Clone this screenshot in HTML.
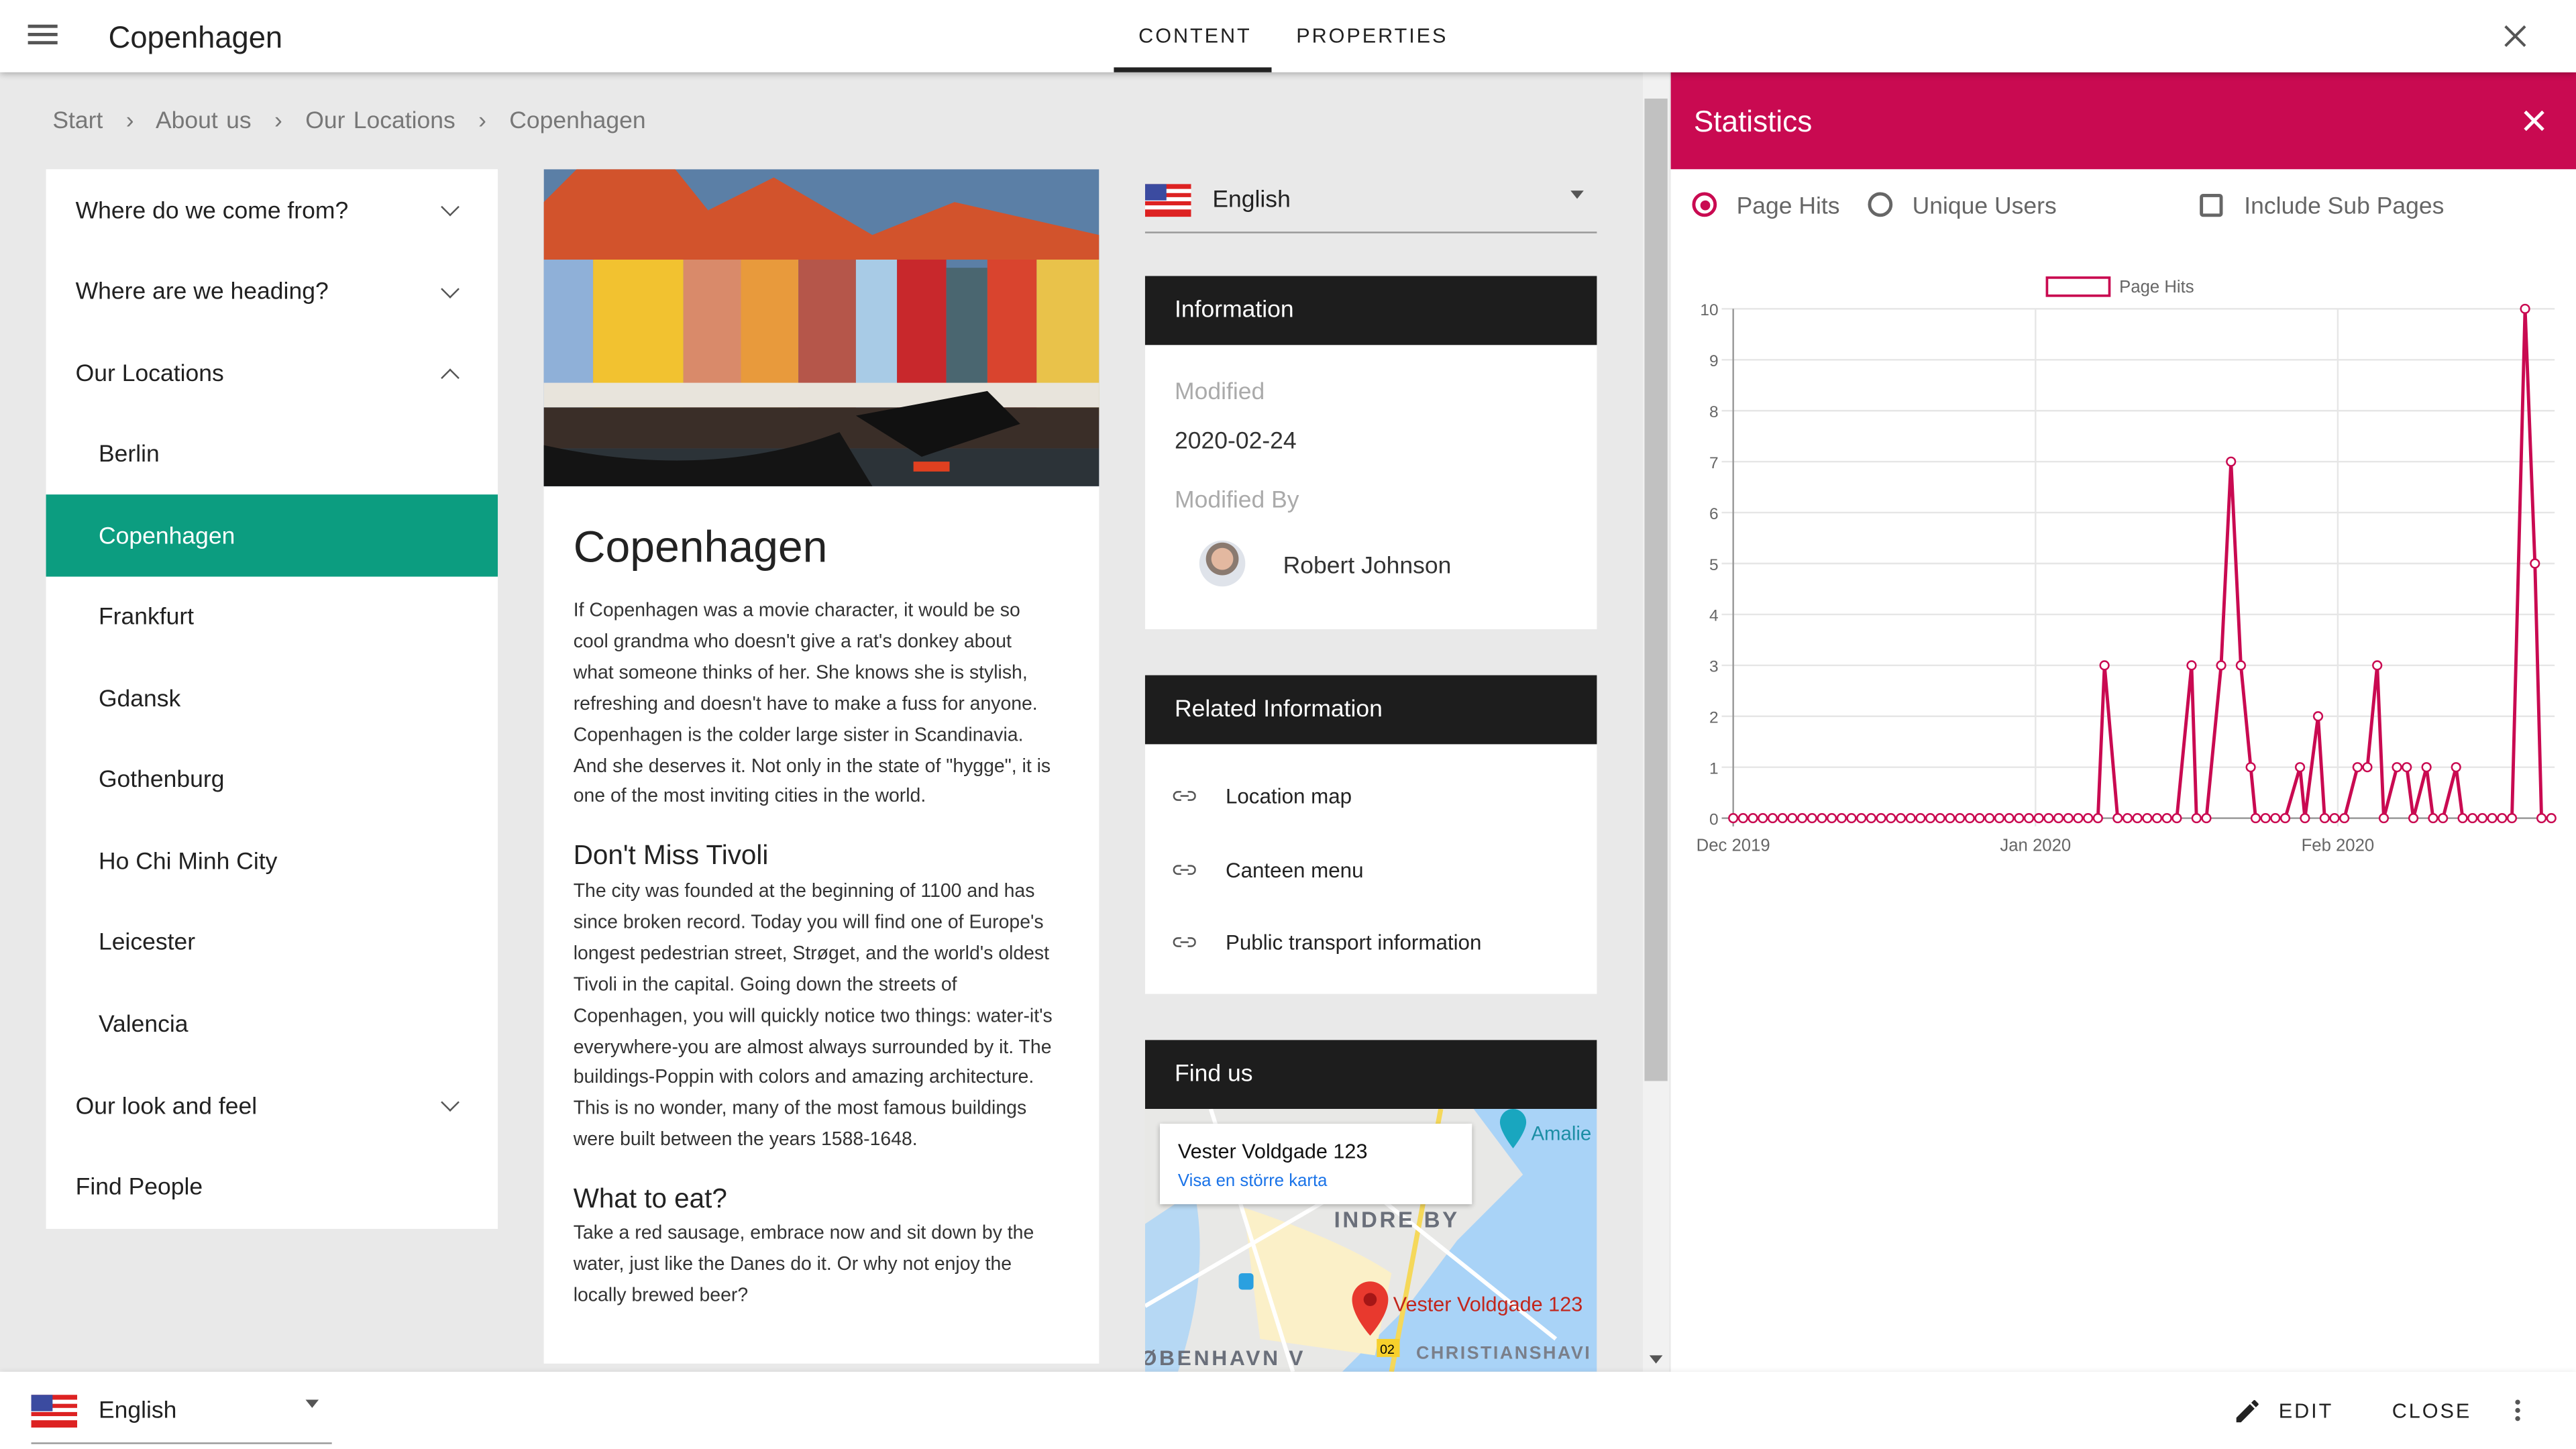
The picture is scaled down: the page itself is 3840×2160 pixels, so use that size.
<!DOCTYPE html>
<html><head><meta charset="utf-8">
<style>
html,body{margin:0;padding:0;width:3840px;height:2160px;overflow:hidden;background:#fff}
#r{position:absolute;left:0;top:0;width:1568px;height:882px;transform:scale(2.44898);transform-origin:0 0;font-family:"Liberation Sans",Roboto,sans-serif;color:#212121;background:#e9e9e9;overflow:hidden}
.a{position:absolute}
.hdr{left:0;top:0;width:1568px;height:44px;background:#fff;box-shadow:0 1px 4px rgba(0,0,0,.3);z-index:5}
.nav{left:28px;top:103px;width:275px;height:645px;background:#fff}
.nav div{position:absolute;left:18px;font-size:14.5px}
.chev{position:absolute;left:242px;width:7px;height:7px;border-right:1.6px solid #555;border-bottom:1.6px solid #555}
.card{background:#fff}
.bh{background:#1d1d1d;color:#fff;font-size:14.5px;padding-left:18px;line-height:42px;height:42px}
p{margin:0}
.txt{font-size:11.6px;line-height:18.9px;color:#333}
.link{position:absolute;left:49px;font-size:12.8px;color:#222}
.li{position:absolute;left:17px;width:14px;height:7px}
</style></head><body><div id="r">
<div class="a hdr">
 <div class="a" style="left:17px;top:15px;width:18px;height:2px;background:#555;box-shadow:0 5px 0 #555,0 10px 0 #555"></div>
 <div class="a" style="left:66px;top:12px;font-size:18.5px;color:#222">Copenhagen</div>
 <div class="a" style="left:693px;top:15px;font-size:12.5px;letter-spacing:1.2px;color:#222">CONTENT</div>
 <div class="a" style="left:678px;top:41px;width:96px;height:3px;background:#222"></div>
 <div class="a" style="left:789px;top:15px;font-size:12.5px;letter-spacing:1.2px;color:#222">PROPERTIES</div>
 <svg class="a" style="left:1524px;top:15px" width="14" height="14"><path d="M1 1L13 13M13 1L1 13" stroke="#555" stroke-width="1.6"/></svg>
</div>
<div class="a" style="left:32px;top:66px;font-size:14.5px;color:#777;word-spacing:1px">Start <span style="margin:0 9px">›</span> About us <span style="margin:0 9px">›</span> Our Locations <span style="margin:0 9px">›</span> Copenhagen</div>
<div class="a nav">
 <div style="top:18px">Where do we come from?</div><span class="chev" style="top:19px;transform:rotate(45deg)"></span>
 <div style="top:67px">Where are we heading?</div><span class="chev" style="top:69px;transform:rotate(45deg)"></span>
 <div style="top:117px">Our Locations</div><span class="chev" style="top:123px;transform:rotate(225deg)"></span>
 <div style="top:166px;left:32px">Berlin</div>
 <div style="top:198px;left:0;width:275px;height:50px;background:#0c9d80"></div>
 <div style="top:216px;left:32px;color:#fff">Copenhagen</div>
 <div style="top:265px;left:32px">Frankfurt</div>
 <div style="top:315px;left:32px">Gdansk</div>
 <div style="top:364px;left:32px">Gothenburg</div>
 <div style="top:414px;left:32px">Ho Chi Minh City</div>
 <div style="top:463px;left:32px">Leicester</div>
 <div style="top:513px;left:32px">Valencia</div>
 <div style="top:563px">Our look and feel</div><span class="chev" style="top:564px;transform:rotate(45deg)"></span>
 <div style="top:612px">Find People</div>
</div>
<div class="a card" style="left:331px;top:103px;width:338px;height:727px">
 <svg class="a" style="left:0;top:0" width="338" height="193">
  <rect width="338" height="193" fill="#5b7fa6"/>
  <rect x="0" y="20" width="30" height="130" fill="#8fb0d8"/>
  <rect x="30" y="25" width="55" height="125" fill="#f2c230"/>
  <rect x="85" y="35" width="35" height="115" fill="#d98a6a"/>
  <rect x="120" y="35" width="35" height="115" fill="#e89a3c"/>
  <rect x="155" y="45" width="35" height="105" fill="#b5564a"/>
  <rect x="190" y="55" width="25" height="95" fill="#a8cbe6"/>
  <rect x="215" y="45" width="30" height="105" fill="#c8282c"/>
  <rect x="245" y="60" width="25" height="90" fill="#4a6670"/>
  <rect x="270" y="50" width="30" height="100" fill="#d9442e"/>
  <rect x="300" y="55" width="38" height="95" fill="#e9c24a"/>
  <path d="M0 20L20 0H80L100 25L140 5L200 40L250 20L338 40V55H0Z" fill="#d2532c"/>
  <rect x="0" y="130" width="338" height="15" fill="#e8e4dc"/>
  <rect x="0" y="145" width="338" height="25" fill="#3a2e28"/>
  <rect x="0" y="170" width="338" height="23" fill="#2c3338"/>
  <path d="M0 168Q100 190 180 160L200 193H0Z" fill="#141414"/>
  <path d="M190 150L270 135L290 155L230 175Z" fill="#111"/>
  <path d="M225 178h22v6h-22z" fill="#e04020"/>
 </svg>
 <div class="a" style="left:18px;top:215px;font-size:27px;color:#222">Copenhagen</div>
 <p class="a txt" style="left:18px;top:260px;width:291px">If Copenhagen was a movie character, it would be so cool grandma who doesn't give a rat's donkey about what someone thinks of her. She knows she is stylish, refreshing and doesn't have to make a fuss for anyone. Copenhagen is the colder large sister in Scandinavia. And she deserves it. Not only in the state of "hygge", it is one of the most inviting cities in the world.</p>
 <div class="a" style="left:18px;top:409px;font-size:16.5px;color:#222">Don't Miss Tivoli</div>
 <p class="a txt" style="left:18px;top:431px;width:300px">The city was founded at the beginning of 1100 and has since broken record. Today you will find one of Europe's longest pedestrian street, Strøget, and the world's oldest Tivoli in the capital. Going down the streets of Copenhagen, you will quickly notice two things: water-it's everywhere-you are almost always surrounded by it. The buildings-Poppin with colors and amazing architecture. This is no wonder, many of the most famous buildings were built between the years 1588-1648.</p>
 <div class="a" style="left:18px;top:618px;font-size:16.5px;color:#222">What to eat?</div>
 <p class="a txt" style="left:18px;top:639px;width:291px">Take a red sausage, embrace now and sit down by the water, just like the Danes do it. Or why not enjoy the locally brewed beer?</p>
</div>
<svg class="a" style="left:697px;top:112px" width="28" height="20"><rect width="28" height="20" fill="#d22"/><rect y="3" width="28" height="2.5" fill="#fff"/><rect y="8" width="28" height="2.5" fill="#fff"/><rect y="13" width="28" height="2.5" fill="#fff"/><rect width="13" height="10" fill="#3b4ba0"/></svg>
<div class="a" style="left:738px;top:114px;font-size:14.5px">English</div>
<div class="a" style="left:956px;top:116px;border:4.5px solid transparent;border-top:5px solid #555"></div>
<div class="a" style="left:697px;top:141px;width:275px;height:1px;background:#999"></div>
<div class="a card" style="left:697px;top:168px;width:275px;height:215px">
 <div class="bh">Information</div>
 <div class="a" style="left:18px;top:63px;font-size:14.5px;color:#aaa">Modified</div>
 <div class="a" style="left:18px;top:93px;font-size:14.5px;color:#333">2020-02-24</div>
 <div class="a" style="left:18px;top:129px;font-size:14.5px;color:#aaa">Modified By</div>
 <div class="a" style="left:33px;top:161px;width:28px;height:28px;border-radius:50%;background:radial-gradient(circle at 50% 40%,#e3b8a0 0 30%,#8a7a70 31% 45%,#dfe3ea 46%)"></div>
 <div class="a" style="left:84px;top:169px;font-size:14.5px;color:#333">Robert Johnson</div>
</div>
<div class="a card" style="left:697px;top:411px;width:275px;height:194px">
 <div class="bh">Related Information</div>
 <svg class="li" style="top:70px" viewBox="0 0 14 7"><path d="M5 1H3a2.5 2.5 0 000 5h2M9 1h2a2.5 2.5 0 010 5H9M4.5 3.5h5" stroke="#555" fill="none" stroke-width="1"/></svg>
 <div class="link" style="top:66px">Location map</div>
 <svg class="li" style="top:115px" viewBox="0 0 14 7"><path d="M5 1H3a2.5 2.5 0 000 5h2M9 1h2a2.5 2.5 0 010 5H9M4.5 3.5h5" stroke="#555" fill="none" stroke-width="1"/></svg>
 <div class="link" style="top:111px">Canteen menu</div>
 <svg class="li" style="top:159px" viewBox="0 0 14 7"><path d="M5 1H3a2.5 2.5 0 000 5h2M9 1h2a2.5 2.5 0 010 5H9M4.5 3.5h5" stroke="#555" fill="none" stroke-width="1"/></svg>
 <div class="link" style="top:155px">Public transport information</div>
</div>
<div class="a" style="left:697px;top:633px;width:275px;height:202px;overflow:hidden;background:#eceae6">
 <div class="bh">Find us</div>
 <svg class="a" style="left:0;top:42px" width="275" height="160">
  <rect width="275" height="160" fill="#e8e8e6"/>
  <path d="M200 0L275 0V160H120L160 120L190 80L230 40Z" fill="#a9d3f7"/>
  <path d="M30 50Q40 100 20 160H0V70Z" fill="#a9d3f7" opacity=".8"/>
  <path d="M60 60Q120 80 150 100L140 150L70 140Z" fill="#fbf0c8"/>
  <path d="M180 0L150 160" stroke="#f5d85a" stroke-width="3"/>
  <path d="M0 120L120 50M40 0L90 160M100 20L250 140" stroke="#fff" stroke-width="2.5" fill="none"/>
  <path d="M216 8a8 8 0 0116 0c0 6-8 16-8 16s-8-10-8-16z" fill="#19a6bf"/>
  <text x="235" y="19" font-size="12" fill="#1c8ea5" font-family="Liberation Sans">Amalie</text>
  <text x="115" y="72" font-size="13.5" fill="#6a6f7a" font-weight="bold" letter-spacing="1.5" font-family="Liberation Sans">INDRE BY</text>
  <text x="-3" y="156" font-size="13" fill="#6a6f7a" font-weight="bold" letter-spacing="1.5" font-family="Liberation Sans">ØBENHAVN V</text>
  <text x="165" y="152" font-size="11" fill="#7a7f8a" font-weight="bold" letter-spacing="1" font-family="Liberation Sans">CHRISTIANSHAVI</text>
  <rect x="141" y="140" width="14" height="11" fill="#f7d02c"/>
  <text x="143" y="149" font-size="8" font-family="Liberation Sans">02</text>
  <rect x="57" y="100" width="9" height="10" rx="2" fill="#2aa0e0"/>
  <path d="M126 116a11 11 0 0122 0c0 10-11 22-11 22s-11-12-11-22z" fill="#e8392e"/>
  <circle cx="137" cy="116" r="4" fill="#a51616"/>
  <text x="151" y="123" font-size="12.5" fill="#c2261c" font-family="Liberation Sans">Vester Voldgade 123</text>
 </svg>
 <div class="a" style="left:9px;top:51px;width:190px;height:49px;background:#fff;box-shadow:0 1px 3px rgba(0,0,0,.3)">
  <div class="a" style="left:11px;top:10px;font-size:12.5px;color:#111">Vester Voldgade 123</div>
  <div class="a" style="left:11px;top:29px;font-size:10.5px;color:#1a73e8">Visa en större karta</div>
 </div>
</div>
<div class="a" style="left:1000px;top:44px;width:16px;height:791px;background:#f1f1f1"></div>
<div class="a" style="left:1001px;top:60px;width:14px;height:598px;background:#c1c1c1"></div>
<div class="a" style="left:1004px;top:825px;border:4px solid transparent;border-top:5px solid #555"></div>
<div class="a" style="left:1017px;top:44px;width:551px;height:791px;background:#fff">
 <div class="a" style="left:0;top:0;width:551px;height:59px;background:#c90a51"></div>
 <div class="a" style="left:14px;top:20px;font-size:18px;color:#fff">Statistics</div>
 <svg class="a" style="left:519px;top:23px" width="13" height="13"><path d="M1 1L12 12M12 1L1 12" stroke="#fff" stroke-width="2"/></svg>
 <div class="a" style="left:13px;top:73px;width:15px;height:15px;border:2px solid #c90a51;border-radius:50%;box-sizing:border-box"></div>
 <div class="a" style="left:17.5px;top:77.5px;width:6px;height:6px;background:#c90a51;border-radius:50%"></div>
 <div class="a" style="left:40px;top:74px;font-size:14.5px;color:#666">Page Hits</div>
 <div class="a" style="left:120px;top:73px;width:15px;height:15px;border:2px solid #666;border-radius:50%;box-sizing:border-box"></div>
 <div class="a" style="left:147px;top:74px;font-size:14.5px;color:#666">Unique Users</div>
 <div class="a" style="left:322px;top:74px;width:14px;height:14px;border:2px solid #666;border-radius:2px;box-sizing:border-box"></div>
 <div class="a" style="left:349px;top:74px;font-size:14.5px;color:#666">Include Sub Pages</div>
</div>
<svg id="ch" class="a" style="left:1017px;top:160px" width="551" height="370" font-family="Liberation Sans"></svg>
<div class="a" style="left:0;top:835px;width:1568px;height:47px;background:#fff;box-shadow:0 -1px 3px rgba(0,0,0,.06)">
 <svg class="a" style="left:19px;top:14px" width="28" height="20"><rect width="28" height="20" fill="#d22"/><rect y="3" width="28" height="2.5" fill="#fff"/><rect y="8" width="28" height="2.5" fill="#fff"/><rect y="13" width="28" height="2.5" fill="#fff"/><rect width="13" height="10" fill="#3b4ba0"/></svg>
 <div class="a" style="left:60px;top:16px;font-size:14.5px">English</div>
 <div class="a" style="left:186px;top:17px;border:4.5px solid transparent;border-top:5px solid #555"></div>
 <div class="a" style="left:19px;top:43px;width:183px;height:1px;background:#999"></div>
 <svg class="a" style="left:1359px;top:15px" width="18" height="18" viewBox="0 0 24 24"><path d="M3 17.25V21h3.75L17.81 9.940l-3.75-3.75L3 17.25zM20.71 7.04a1 1 0 000-1.41l-2.34-2.34a1 1 0 00-1.41 0l-1.830 1.83 3.75 3.75 1.83-1.83z" fill="#222"/></svg>
 <div class="a" style="left:1387px;top:17px;font-size:12.5px;letter-spacing:1.2px">EDIT</div>
 <div class="a" style="left:1456px;top:17px;font-size:12.5px;letter-spacing:1.2px">CLOSE</div>
 <div class="a" style="left:1531px;top:17px;width:3px;height:3px;border-radius:50%;background:#555;box-shadow:0 5px 0 #555,0 10px 0 #555"></div>
</div>
</div>
<script>
(function(){
var s='',ox=1017,oy=160;
function X(x){return x-ox}function Y(v){return 498-31*v-oy}
for(var v=0;v<=10;v++){s+='<line x1="'+X(1048)+'" x2="'+X(1555)+'" y1="'+Y(v)+'" y2="'+Y(v)+'" stroke="'+(v==0?'#999':'#e6e6e6')+'"/>';
s+='<text x="'+X(1046)+'" y="'+(Y(v)+4)+'" font-size="10" fill="#666" text-anchor="end">'+v+'</text>';}
[1055,1239,1423].forEach(function(x,i){s+='<line x1="'+X(x)+'" x2="'+X(x)+'" y1="'+Y(10)+'" y2="'+(Y(0)+5)+'" stroke="'+(i==0?'#999':'#e6e6e6')+'"/>';});
s+='<text x="'+X(1055)+'" y="'+(Y(0)+20)+'" font-size="10.5" fill="#666" text-anchor="middle">Dec 2019</text>';
s+='<text x="'+X(1239)+'" y="'+(Y(0)+20)+'" font-size="10.5" fill="#666" text-anchor="middle">Jan 2020</text>';
s+='<text x="'+X(1423)+'" y="'+(Y(0)+20)+'" font-size="10.5" fill="#666" text-anchor="middle">Feb 2020</text>';
s+='<rect x="'+X(1246)+'" y="9" width="38" height="11" fill="#fff" stroke="#c90a51" stroke-width="1.5"/>';
s+='<text x="'+X(1290)+'" y="18" font-size="10.5" fill="#666">Page Hits</text>';
var sp=[[1281,3],[1334,3],[1352,3],[1358,7],[1364,3],[1370,1],[1400,1],[1411,2],[1435,1],[1441,1],[1447,3],[1459,1],[1465,1],[1477,1],[1495,1],[1537,10],[1543,5]];
var xs=[];for(var x=1055;x<=1553;x+=6){xs.push(x);}
var vals=xs.map(function(){return 0});
sp.forEach(function(p){var b=0,d=1e9;xs.forEach(function(x,i){if(Math.abs(x-p[0])<d){d=Math.abs(x-p[0]);b=i}});vals[b]=p[1];xs[b]=p[0];});
var d='';xs.forEach(function(x,i){d+=(i?'L':'M')+X(x)+' '+Y(vals[i]);});
s+='<path d="'+d+'" fill="none" stroke="#c90a51" stroke-width="2" stroke-linejoin="round"/>';
xs.forEach(function(x,i){s+='<circle cx="'+X(x)+'" cy="'+Y(vals[i])+'" r="2.6" fill="#fff" stroke="#c90a51" stroke-width="1"/>';});
document.getElementById('ch').innerHTML=s;
})();
</script>
</body></html>
